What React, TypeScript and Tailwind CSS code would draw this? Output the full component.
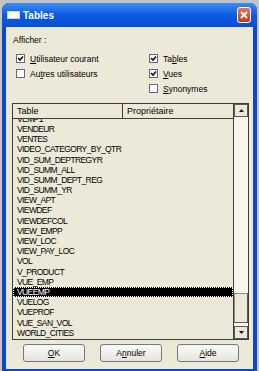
const rows = [
  "VEMP1",
  "VENDEUR",
  "VENTES",
  "VIDEO_CATEGORY_BY_QTR",
  "VID_SUM_DEPTREGYR",
  "VID_SUMM_ALL",
  "VID_SUMM_DEPT_REG",
  "VID_SUMM_YR",
  "VIEW_APT",
  "VIEWDEF",
  "VIEWDEFCOL",
  "VIEW_EMPP",
  "VIEW_LOC",
  "VIEW_PAY_LOC",
  "VOL",
  "V_PRODUCT",
  "VUE_EMP",
  "VUEEMP",
  "VUELOG",
  "VUEPROF",
  "VUE_SAN_VOL",
  "WORLD_CITIES",
];

const Check = ({ checked }: { checked?: boolean }) => (
  <span className="w-[9px] h-[9px] border border-[#5f6b78] bg-white flex items-center justify-center shrink-0">
    {checked && (
      <svg width="7" height="7" viewBox="0 0 7 7">
        <path d="M1 3 L3 5 L6 1.5" stroke="#111" strokeWidth="1.6" fill="none" />
      </svg>
    )}
  </span>
);

const Option = ({ checked, pre, u, post }: { checked?: boolean; pre: string; u: string; post: string }) => (
  <div className="h-[15px] flex items-center gap-[5px]">
    <Check checked={checked} />
    <span>
      {pre}
      <span className="underline">{u}</span>
      {post}
    </span>
  </div>
);

const Button = ({ pre, u, post }: { pre: string; u: string; post: string }) => (
  <button className="w-[62px] h-[18px] rounded-[3px] border border-[#6a7a90] bg-gradient-to-b from-[#fbfbf8] to-[#e6e4da] flex items-center justify-center text-[8.5px]">
    <span>
      {pre}
      <span className="underline">{u}</span>
      {post}
    </span>
  </button>
);

export default function App() {
  return (
    <div className="w-[259px] h-[371px] overflow-hidden bg-[#c4c4c4] pt-[3px] pl-[2px] font-['Liberation_Sans',Arial,sans-serif] text-black">
      <div className="w-[255px] h-[368px] flex flex-col rounded-t-[7px] bg-[#0b48d2]">
        {/* title bar */}
        <div className="h-[24px] flex items-center pl-[5px] pr-[6px] rounded-t-[7px] bg-gradient-to-b from-[#3f8cf3] via-[#0a5ae2] to-[#0650d6]">
          <span className="w-[13px] h-[8px] bg-white border border-[#c9d8f5]"></span>
          <span className="ml-[3px] text-white font-bold text-[10px]">Tables</span>
          <span className="ml-auto w-[14px] h-[16px] rounded-[3px] border border-white bg-gradient-to-b from-[#e87456] to-[#c33a1d] flex items-center justify-center">
            <svg width="8" height="8" viewBox="0 0 8 8">
              <path d="M1 1 L7 7 M7 1 L1 7" stroke="white" strokeWidth="1.8" />
            </svg>
          </span>
        </div>

        {/* body */}
        <div className="flex-1 mx-[4px] mb-[2px] bg-[#ece9d8] text-[8.5px] leading-[10px]">
          <div className="pt-[8px] pl-[7px]">Afficher :</div>

          <div className="mt-[6px] flex">
            <div className="w-[143px] pl-[10px]">
              <Option checked pre="" u="U" post="tilisateur courant" />
              <Option pre="Au" u="t" post="res utilisateurs" />
            </div>
            <div>
              <Option checked pre="Ta" u="b" post="les" />
              <Option checked pre="" u="V" post="ues" />
              <Option pre="" u="S" post="ynonymes" />
            </div>
          </div>

          {/* list */}
          <div className="mt-[7px] ml-[6px] w-[237px] h-[237px] border border-[#3d3d3d] flex">
            <div className="w-[221px] border-r border-[#3d3d3d] flex flex-col">
              <div className="h-[15px] shrink-0 flex border-b border-[#3d3d3d] text-[9px] relative z-10 bg-[#ece9d8]">
                <div className="w-[110px] border-r border-[#3d3d3d] pl-[4px] flex items-center">Table</div>
                <div className="pl-[4px] flex items-center">Propriétaire</div>
              </div>
              <div className="flex-1 overflow-hidden">
                <div className="-mt-[5.3px] tracking-[-0.6px]">
                  {rows.map((r) =>
                    r === "VUEEMP" ? (
                      <div
                        key={r}
                        className="h-[10.2px] flex items-center pl-[4px] bg-black text-white outline-dotted outline-1 outline-white -outline-offset-1"
                      >
                        {r}
                      </div>
                    ) : (
                      <div key={r} className="h-[10.2px] flex items-center pl-[4px]">
                        {r}
                      </div>
                    )
                  )}
                </div>
              </div>
            </div>

            {/* scrollbar */}
            <div className="w-[14px] flex flex-col bg-[#f6f5ee]">
              <div className="h-[13px] border border-[#5a5a5a] bg-[#ece9d8] flex items-center justify-center">
                <svg width="5" height="3" viewBox="0 0 5 3">
                  <path d="M0 3 L2.5 0 L5 3 Z" fill="#111" />
                </svg>
              </div>
              <div className="flex-1"></div>
              <div className="h-[30px] border border-[#8a8a8a] border-b-[#5a5a5a] border-r-[#5a5a5a] bg-[#ece9d8]"></div>
              <div className="h-[3px]"></div>
              <div className="h-[13px] border border-[#5a5a5a] bg-[#ece9d8] flex items-center justify-center">
                <svg width="5" height="3" viewBox="0 0 5 3">
                  <path d="M0 0 L2.5 3 L5 0 Z" fill="#111" />
                </svg>
              </div>
            </div>
          </div>

          {/* buttons */}
          <div className="mt-[4px] ml-[17px] flex gap-[15px]">
            <Button pre="" u="O" post="K" />
            <Button pre="A" u="n" post="nuler" />
            <Button pre="" u="A" post="ide" />
          </div>
        </div>
      </div>
    </div>
  );
}
